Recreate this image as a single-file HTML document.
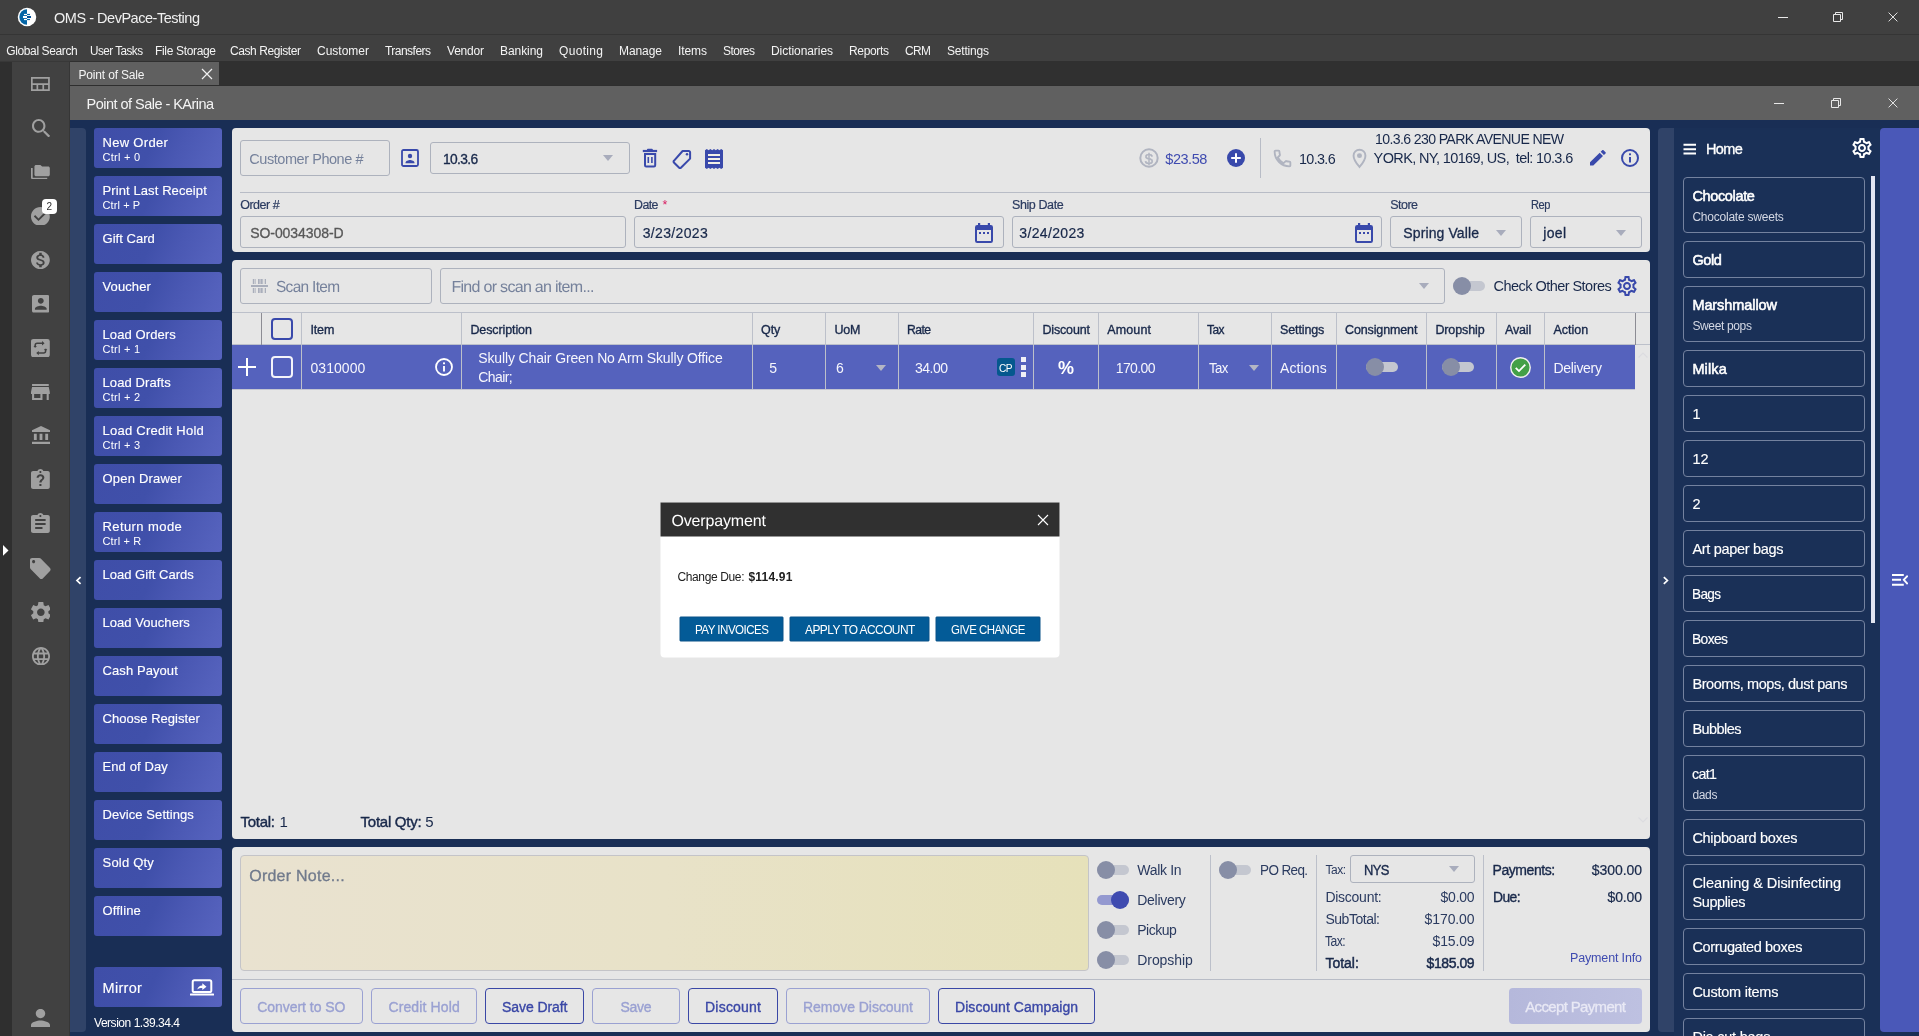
<!DOCTYPE html>
<html lang="en"><head><meta charset="utf-8"><title>OMS - DevPace-Testing</title><style>
html,body{margin:0;padding:0;background:#192e55;}
#app{will-change:transform;position:relative;width:1919px;height:1036px;overflow:hidden;font-family:"Liberation Sans",sans-serif;}
#app div,#app svg,#app .t{position:absolute;box-sizing:border-box;}
.t{white-space:pre;}
</style></head><body><div id="app">
<div style="left:0px;top:0px;width:1919px;height:35px;background:#404040;"></div>
<div style="left:0px;top:34px;width:1919px;height:1px;background:#353535;"></div>
<div style="left:0px;top:35px;width:1919px;height:26px;background:#404040;"></div>
<div style="left:0px;top:61px;width:1919px;height:25px;background:#303030;"></div>
<div style="left:0px;top:62px;width:12px;height:974px;background:#2f2f2f;"></div>
<div style="left:12px;top:62px;width:58px;height:974px;background:#414141;"></div>
<div style="left:0px;top:61px;width:70px;height:1px;background:#383838;"></div>
<div style="left:70px;top:62px;width:149px;height:23px;background:#606060;"></div>
<div style="left:70px;top:85px;width:1849px;height:1px;background:#2e2e2e;"></div>
<div style="left:70px;top:86px;width:1849px;height:34px;background:#606060;"></div>
<div style="left:70px;top:120px;width:1849px;height:916px;background:#192e55;"></div>
<svg style="left:17px;top:7px;width:20px;height:20px;" viewBox="0 0 20 20" fill="currentColor"><circle cx="10" cy="10" r="9.250" fill="#fff"/><path d="M10 2.300A7.700 7.700 0 0 0 10 17.700Z" fill="#0465a6"/><rect x="7" y="6.900" width="3" height="1.200" fill="#fff"/><rect x="6" y="9" width="4" height="2" fill="#fff"/><rect x="7" y="11.900" width="3" height="1.200" fill="#fff"/><rect x="10" y="6.900" width="3" height="1.200" fill="#0465a6"/><rect x="10" y="9" width="4" height="2" fill="#00509a"/><rect x="10" y="11.900" width="3" height="1.200" fill="#0465a6"/></svg>
<span class="t" style="left:54.00px;top:9.00px;font-size:14.5px;line-height:19px;color:#f0f0f0;letter-spacing:-0.476px;">OMS - DevPace-Testing</span>
<svg style="left:1776.5px;top:11px;width:12px;height:12px;" viewBox="0 0 12 12" fill="currentColor"><path d="M1 6.5h10" stroke="#e8e8e8" stroke-width="1" fill="none"/></svg>
<svg style="left:1832px;top:11px;width:12px;height:12px;" viewBox="0 0 12 12" fill="currentColor"><path d="M1.5 3.5h7v7h-7z M3.5 3.5v-2h7v7h-2" stroke="#e8e8e8" stroke-width="1" fill="none"/></svg>
<svg style="left:1886.5px;top:11px;width:12px;height:12px;" viewBox="0 0 12 12" fill="currentColor"><path d="M1 1l10 10M11 1L1 11" stroke="#e8e8e8" stroke-width="1.100" fill="none" transform="translate(0.700 0.700) scale(0.880)"/></svg>
<svg style="left:1772.5px;top:97px;width:12px;height:12px;" viewBox="0 0 12 12" fill="currentColor"><path d="M1 6.5h10" stroke="#e8e8e8" stroke-width="1" fill="none"/></svg>
<svg style="left:1830px;top:97px;width:12px;height:12px;" viewBox="0 0 12 12" fill="currentColor"><path d="M1.5 3.5h7v7h-7z M3.5 3.5v-2h7v7h-2" stroke="#e8e8e8" stroke-width="1" fill="none"/></svg>
<svg style="left:1886.5px;top:97px;width:12px;height:12px;" viewBox="0 0 12 12" fill="currentColor"><path d="M1 1l10 10M11 1L1 11" stroke="#e8e8e8" stroke-width="1.100" fill="none" transform="translate(0.700 0.700) scale(0.880)"/></svg>
<span class="t" style="left:6.30px;top:43.00px;font-size:12px;line-height:16px;color:#f4f4f4;letter-spacing:-0.387px;">Global Search</span>
<span class="t" style="left:90.00px;top:43.00px;font-size:12px;line-height:16px;color:#f4f4f4;letter-spacing:-0.540px;transform:scaleX(0.9766);transform-origin:0 0;">User Tasks</span>
<span class="t" style="left:155.00px;top:43.00px;font-size:12px;line-height:16px;color:#f4f4f4;letter-spacing:-0.337px;">File Storage</span>
<span class="t" style="left:230.00px;top:43.00px;font-size:12px;line-height:16px;color:#f4f4f4;letter-spacing:-0.419px;">Cash Register</span>
<span class="t" style="left:317.00px;top:43.00px;font-size:12px;line-height:16px;color:#f4f4f4;letter-spacing:-0.002px;">Customer</span>
<span class="t" style="left:385.00px;top:43.00px;font-size:12px;line-height:16px;color:#f4f4f4;letter-spacing:-0.529px;">Transfers</span>
<span class="t" style="left:447.00px;top:43.00px;font-size:12px;line-height:16px;color:#f4f4f4;letter-spacing:-0.207px;">Vendor</span>
<span class="t" style="left:500.00px;top:43.00px;font-size:12px;line-height:16px;color:#f4f4f4;letter-spacing:-0.061px;">Banking</span>
<span class="t" style="left:559.00px;top:43.00px;font-size:12px;line-height:16px;color:#f4f4f4;letter-spacing:0.328px;">Quoting</span>
<span class="t" style="left:619.00px;top:43.00px;font-size:12px;line-height:16px;color:#f4f4f4;letter-spacing:-0.073px;">Manage</span>
<span class="t" style="left:678.00px;top:43.00px;font-size:12px;line-height:16px;color:#f4f4f4;letter-spacing:-0.085px;">Items</span>
<span class="t" style="left:723.00px;top:43.00px;font-size:12px;line-height:16px;color:#f4f4f4;letter-spacing:-0.537px;">Stores</span>
<span class="t" style="left:771.00px;top:43.00px;font-size:12px;line-height:16px;color:#f4f4f4;letter-spacing:-0.063px;">Dictionaries</span>
<span class="t" style="left:849.00px;top:43.00px;font-size:12px;line-height:16px;color:#f4f4f4;letter-spacing:-0.336px;">Reports</span>
<span class="t" style="left:905.00px;top:43.00px;font-size:12px;line-height:16px;color:#f4f4f4;letter-spacing:-0.540px;transform:scaleX(0.9905);transform-origin:0 0;">CRM</span>
<span class="t" style="left:947.00px;top:43.00px;font-size:12px;line-height:16px;color:#f4f4f4;letter-spacing:-0.194px;">Settings</span>
<span class="t" style="left:78.50px;top:67.00px;font-size:12px;line-height:16px;color:#f4f4f4;letter-spacing:-0.171px;">Point of Sale</span>
<svg style="left:201px;top:68px;width:12px;height:12px;" viewBox="0 0 12 12" fill="currentColor"><path d="M1 1l10 10M11 1L1 11" stroke="#f0f0f0" stroke-width="1.2" fill="none"/></svg>
<span class="t" style="left:86.60px;top:95.00px;font-size:14.5px;line-height:19px;color:#f4f4f4;letter-spacing:-0.530px;">Point of Sale - KArina</span>
<svg style="left:31.1px;top:77px;width:18.8px;height:14px;color:#a0a0a0;" viewBox="0 0 18.800 14" fill="currentColor"><path d="M0 0h18.800v14H0z M1.700 1.700v4.600h15.400V1.700z M1.700 8v4.300h3.800V8z M7.200 8v4.300h4.200V8z M13.100 8v4.300h4V8z" fill-rule="evenodd"/></svg>
<svg style="left:31.5px;top:118.7px;width:18.1px;height:18.5px;color:#a0a0a0" viewBox="3.000 3.000 17.490 17.490" preserveAspectRatio="none" fill="currentColor"><path d="M15.5 14h-.79l-.28-.27C15.41 12.59 16 11.11 16 9.5 16 5.91 13.09 3 9.5 3S3 5.91 3 9.5 5.91 16 9.5 16c1.61 0 3.09-.59 4.23-1.57l.27.28v.79l5 4.99L20.490 19l-4.990-5zm-6 0C7.010 14 5 11.990 5 9.500S7.010 5 9.500 5 14 7.010 14 9.500 11.990 14 9.500 14z"/></svg>
<svg style="left:31.1px;top:164.7px;width:18.8px;height:14.3px;color:#a0a0a0" viewBox="1.000 2.000 22.000 19.000" preserveAspectRatio="none" fill="currentColor"><path d="M3 6H1v13c0 1.1.9 2 2 2h17v-2H3V6zm18-2h-7l-2-2H7c-1.100 0-1.990.900-1.990 2L5 15c0 1.100.900 2 2 2h14c1.100 0 2-.900 2-2V6c0-1.100-.900-2-2-2z"/></svg>
<svg style="left:31.1px;top:206.5px;width:18.8px;height:18.8px;color:#a0a0a0" viewBox="2.000 2.000 20.000 20.000" preserveAspectRatio="none" fill="currentColor"><path d="M12 2C6.480 2 2 6.480 2 12s4.480 10 10 10 10-4.480 10-10S17.520 2 12 2zm-2 15l-5-5 1.410-1.410L10 14.170l7.590-7.590L19 8l-9 9z"/></svg>
<svg style="left:31.1px;top:250.9px;width:18.8px;height:18.2px;color:#a0a0a0" viewBox="2.000 2.000 20.000 20.000" preserveAspectRatio="none" fill="currentColor"><path d="M12 2C6.480 2 2 6.480 2 12s4.480 10 10 10 10-4.480 10-10S17.520 2 12 2zm1.410 16.090V20h-2.670v-1.930c-1.710-.360-3.160-1.460-3.270-3.400h1.960c.100 1.050.820 1.870 2.650 1.870 1.960 0 2.400-.980 2.400-1.590 0-.830-.440-1.610-2.670-2.140-2.480-.600-4.180-1.620-4.180-3.670 0-1.720 1.390-2.840 3.110-3.210V4h2.670v1.950c1.860.450 2.790 1.860 2.850 3.390H14.300c-.050-1.110-.640-1.870-2.220-1.870-1.500 0-2.400.680-2.400 1.640 0 .840.650 1.390 2.670 1.910s4.180 1.390 4.180 3.910c-.010 1.830-1.380 2.830-3.120 3.160z"/></svg>
<svg style="left:31.7px;top:295.1px;width:17.6px;height:17.6px;color:#a0a0a0" viewBox="3.000 3.000 18.000 18.000" preserveAspectRatio="none" fill="currentColor"><path d="M3 5v14c0 1.100.890 2 2 2h14c1.100 0 2-.900 2-2V5c0-1.100-.900-2-2-2H5c-1.110 0-2 .900-2 2zm12 4c0 1.660-1.340 3-3 3s-3-1.340-3-3 1.340-3 3-3 3 1.340 3 3zm-9 8c0-2 4-3.100 6-3.100s6 1.100 6 3.100v1H6v-1z"/></svg>
<svg style="left:31.1px;top:338.7px;width:18.8px;height:18.3px;color:#a0a0a0;" viewBox="0 0 18.800 18.300" fill="currentColor"><rect x="0" y="0" width="18.800" height="18.300" rx="2.500"/><path d="M4.200 8.500V6.200a2 2 0 0 1 2-2h5.500 M14.600 9.800v2.300a2 2 0 0 1-2 2H7.100" stroke="#404040" stroke-width="1.500" fill="none"/><path d="M11 2l2.600 2.200L11 6.400z M7.800 11.900l-2.600 2.200 2.600 2.200z M2.500 8l1.700-2 1.700 2z M16.300 10.300l-1.700 2-1.700-2z" fill="#404040"/></svg>
<svg style="left:31.1px;top:384px;width:18.8px;height:16px;color:#a0a0a0" viewBox="3.000 4.000 18.000 16.000" preserveAspectRatio="none" fill="currentColor"><path d="M20 4H4v2h16V4zm1 10v-2l-1-5H4l-1 5v2h1v6h10v-6h4v6h2v-6h1zm-9 4H6v-4h6v4z"/></svg>
<svg style="left:31.5px;top:425.9px;width:18px;height:18.3px;color:#a0a0a0" viewBox="2.000 1.000 19.000 21.000" preserveAspectRatio="none" fill="currentColor"><path d="M4 10v7h3v-7H4zm6 0v7h3v-7h-3zM2 22h19v-3H2v3zm14-12v7h3v-7h-3zm-4.500-9L2 6v2h19V6l-9.500-5z"/></svg>
<svg style="left:31.1px;top:469.2px;width:18.8px;height:19.9px;color:#a0a0a0" viewBox="3.000 1.000 18.000 20.000" preserveAspectRatio="none" fill="currentColor"><path d="M19 3h-4.180C14.400 1.840 13.300 1 12 1c-1.300 0-2.400.840-2.820 2H5c-1.100 0-2 .900-2 2v14c0 1.100.900 2 2 2h14c1.100 0 2-.900 2-2V5c0-1.100-.900-2-2-2zm-7 0c.550 0 1 .450 1 1s-.450 1-1 1-1-.450-1-1 .450-1 1-1zm1 15h-2v-2h2v2zm1.800-6.100c-.700.900-1.500 1.300-1.700 2.600h-2.100c.1-1.700.900-2.400 1.700-3.100.600-.500 1.100-.900 1.100-1.700 0-.900-.800-1.500-1.700-1.500-1 0-1.700.700-1.800 1.600H8.300c.200-2 1.700-3.500 3.800-3.500 2.100 0 3.700 1.300 3.700 3.300 0 1-.400 1.700-1 2.300z"/></svg>
<svg style="left:31.1px;top:513.1px;width:18.8px;height:20px;color:#a0a0a0" viewBox="3.000 1.000 18.000 20.000" preserveAspectRatio="none" fill="currentColor"><path d="M19 3h-4.180C14.400 1.840 13.300 1 12 1c-1.300 0-2.400.840-2.820 2H5c-1.100 0-2 .900-2 2v14c0 1.100.900 2 2 2h14c1.100 0 2-.900 2-2V5c0-1.100-.900-2-2-2zm-7 0c.550 0 1 .450 1 1s-.450 1-1 1-1-.450-1-1 .450-1 1-1zm2 14H7v-2h7v2zm3-4H7v-2h10v2zm0-4H7V7h10v2z"/></svg>
<svg style="left:30.1px;top:557.5px;width:20.6px;height:21px;color:#a0a0a0" viewBox="2.000 2.000 20.000 20.000" preserveAspectRatio="none" fill="currentColor"><path d="M21.410 11.580l-9-9C12.050 2.220 11.550 2 11 2H4c-1.100 0-2 .900-2 2v7c0 .550.220 1.050.590 1.420l9 9c.360.360.860.580 1.410.580.550 0 1.050-.220 1.410-.590l7-7c.370-.360.590-.860.590-1.410 0-.550-.230-1.060-.590-1.420zM5.500 7C4.670 7 4 6.330 4 5.500S4.670 4 5.500 4 7 4.670 7 5.500 6.330 7 5.500 7z"/></svg>
<svg style="left:30.7px;top:601.7px;width:19.7px;height:20.5px;color:#a0a0a0" viewBox="2.662 2.400 18.676 19.200" preserveAspectRatio="none" fill="currentColor"><path d="M19.140 12.940c.040-.300.060-.610.060-.940 0-.320-.020-.640-.070-.940l2.030-1.580c.180-.140.230-.410.120-.610l-1.920-3.320c-.120-.220-.370-.290-.590-.220l-2.390.960c-.500-.380-1.030-.700-1.620-.940l-.360-2.540c-.040-.240-.240-.410-.480-.410h-3.840c-.240 0-.430.170-.470.410l-.360 2.540c-.590.240-1.130.570-1.620.940l-2.390-.960c-.220-.080-.470 0-.590.220L2.740 8.870c-.120.210-.080.470.120.610l2.030 1.580c-.050.300-.090.630-.090.940s.020.640.070.940l-2.030 1.580c-.180.140-.230.410-.120.610l1.920 3.320c.120.220.370.290.590.220l2.390-.960c.500.380 1.030.700 1.620.940l.360 2.540c.050.240.240.410.480.410h3.840c.240 0 .440-.170.470-.410l.360-2.540c.590-.240 1.130-.560 1.620-.940l2.390.960c.220.080.470 0 .590-.220l1.920-3.320c.120-.220.070-.470-.120-.610l-2.010-1.580zM12 15.600c-1.980 0-3.600-1.620-3.600-3.600s1.620-3.600 3.600-3.600 3.600 1.620 3.600 3.600-1.620 3.600-3.600 3.600z"/></svg>
<svg style="left:31.6px;top:646.8px;width:18px;height:18.6px;color:#a0a0a0" viewBox="2.000 2.000 20.000 20.000" preserveAspectRatio="none" fill="currentColor"><path d="M11.990 2C6.470 2 2 6.480 2 12s4.470 10 9.990 10C17.520 22 22 17.520 22 12S17.520 2 11.990 2zm6.930 6h-2.950c-.320-1.250-.780-2.450-1.380-3.560 1.840.630 3.370 1.910 4.330 3.560zM12 4.040c.830 1.200 1.480 2.530 1.910 3.960h-3.820c.430-1.430 1.080-2.760 1.910-3.960zM4.260 14C4.100 13.360 4 12.690 4 12s.100-1.360.260-2h3.380c-.080.660-.140 1.320-.140 2 0 .680.060 1.340.140 2H4.260zm.820 2h2.950c.320 1.250.780 2.450 1.380 3.560-1.840-.630-3.370-1.900-4.330-3.560zm2.950-8H5.080c.960-1.660 2.490-2.930 4.330-3.560C8.810 5.550 8.350 6.750 8.030 8zM12 19.960c-.830-1.200-1.480-2.530-1.910-3.960h3.820c-.430 1.430-1.080 2.760-1.910 3.960zM14.340 14H9.660c-.090-.660-.160-1.320-.160-2 0-.680.070-1.350.160-2h4.680c.090.650.160 1.320.160 2 0 .680-.070 1.340-.160 2zm.250 5.560c.600-1.110 1.060-2.310 1.380-3.560h2.950c-.960 1.650-2.490 2.930-4.330 3.560zM16.360 14c.080-.660.140-1.320.140-2 0-.680-.060-1.340-.140-2h3.380c.160.640.260 1.310.260 2s-.100 1.360-.260 2h-3.380z"/></svg>
<svg style="left:31px;top:1008.8px;width:19px;height:18.4px;color:#a0a0a0" viewBox="4.000 4.000 16.000 16.000" preserveAspectRatio="none" fill="currentColor"><path d="M12 12c2.210 0 4-1.790 4-4s-1.790-4-4-4-4 1.790-4 4 1.790 4 4 4zm0 2c-2.670 0-8 1.340-8 4v2h16v-2c0-2.660-5.330-4-8-4z"/></svg>
<div style="left:69px;top:61px;width:1px;height:975px;background:#363636;"></div>
<div style="left:42px;top:199px;width:15px;height:15px;background:#ffffff;border-radius:4px;"></div>
<span class="t" style="left:46.50px;top:200.00px;font-size:10px;line-height:13px;color:#303030;">2</span>
<svg style="left:3px;top:545.3px;width:5.5px;height:10.8px;" viewBox="0 0 5.500 10.800" fill="currentColor"><path d="M0 0l5.500 5.400-5.500 5.400z" fill="#fff"/></svg>
<div style="left:70px;top:128px;width:16px;height:904px;background:#304368;border-radius:0 4px 4px 0;"></div>
<svg style="left:74.6px;top:575.6px;width:7.4px;height:9px;" viewBox="0 0 9 11" fill="currentColor"><path d="M6.800 1.300L2.400 5.500 6.800 9.700" stroke="#fff" stroke-width="2.100" fill="none"/></svg>
<div style="left:94px;top:128px;width:128px;height:40px;background:linear-gradient(115deg,#3f4ea8 0%,#4050aa 45%,#4a58b3 65%,#5461bc 90%,#5763bf 100%);border-radius:3px;"></div>
<span class="t" style="left:102.50px;top:134.00px;font-size:13px;line-height:17px;color:#fff;letter-spacing:0.306px;-webkit-text-stroke:0.15px #fff;">New Order</span>
<span class="t" style="left:102.50px;top:150.00px;font-size:11px;line-height:14px;color:#fff;letter-spacing:0.277px;">Ctrl + 0</span>
<div style="left:94px;top:176px;width:128px;height:40px;background:linear-gradient(115deg,#3f4ea8 0%,#4050aa 45%,#4a58b3 65%,#5461bc 90%,#5763bf 100%);border-radius:3px;"></div>
<span class="t" style="left:102.50px;top:182.00px;font-size:13px;line-height:17px;color:#fff;letter-spacing:0.100px;-webkit-text-stroke:0.15px #fff;">Print Last Receipt</span>
<span class="t" style="left:102.50px;top:198.00px;font-size:11px;line-height:14px;color:#fff;letter-spacing:0.103px;">Ctrl + P</span>
<div style="left:94px;top:224px;width:128px;height:40px;background:linear-gradient(115deg,#3f4ea8 0%,#4050aa 45%,#4a58b3 65%,#5461bc 90%,#5763bf 100%);border-radius:3px;"></div>
<span class="t" style="left:102.50px;top:230.00px;font-size:13px;line-height:17px;color:#fff;letter-spacing:0.036px;-webkit-text-stroke:0.15px #fff;">Gift Card</span>
<div style="left:94px;top:272px;width:128px;height:40px;background:linear-gradient(115deg,#3f4ea8 0%,#4050aa 45%,#4a58b3 65%,#5461bc 90%,#5763bf 100%);border-radius:3px;"></div>
<span class="t" style="left:102.50px;top:278.00px;font-size:13px;line-height:17px;color:#fff;letter-spacing:0.099px;-webkit-text-stroke:0.15px #fff;">Voucher</span>
<div style="left:94px;top:320px;width:128px;height:40px;background:linear-gradient(115deg,#3f4ea8 0%,#4050aa 45%,#4a58b3 65%,#5461bc 90%,#5763bf 100%);border-radius:3px;"></div>
<span class="t" style="left:102.50px;top:326.00px;font-size:13px;line-height:17px;color:#fff;letter-spacing:0.104px;-webkit-text-stroke:0.15px #fff;">Load Orders</span>
<span class="t" style="left:102.50px;top:342.00px;font-size:11px;line-height:14px;color:#fff;letter-spacing:0.277px;">Ctrl + 1</span>
<div style="left:94px;top:368px;width:128px;height:40px;background:linear-gradient(115deg,#3f4ea8 0%,#4050aa 45%,#4a58b3 65%,#5461bc 90%,#5763bf 100%);border-radius:3px;"></div>
<span class="t" style="left:102.50px;top:374.00px;font-size:13px;line-height:17px;color:#fff;letter-spacing:0.110px;-webkit-text-stroke:0.15px #fff;">Load Drafts</span>
<span class="t" style="left:102.50px;top:390.00px;font-size:11px;line-height:14px;color:#fff;letter-spacing:0.277px;">Ctrl + 2</span>
<div style="left:94px;top:416px;width:128px;height:40px;background:linear-gradient(115deg,#3f4ea8 0%,#4050aa 45%,#4a58b3 65%,#5461bc 90%,#5763bf 100%);border-radius:3px;"></div>
<span class="t" style="left:102.50px;top:422.00px;font-size:13px;line-height:17px;color:#fff;letter-spacing:0.249px;-webkit-text-stroke:0.15px #fff;">Load Credit Hold</span>
<span class="t" style="left:102.50px;top:438.00px;font-size:11px;line-height:14px;color:#fff;letter-spacing:0.277px;">Ctrl + 3</span>
<div style="left:94px;top:464px;width:128px;height:40px;background:linear-gradient(115deg,#3f4ea8 0%,#4050aa 45%,#4a58b3 65%,#5461bc 90%,#5763bf 100%);border-radius:3px;"></div>
<span class="t" style="left:102.50px;top:470.00px;font-size:13px;line-height:17px;color:#fff;letter-spacing:0.199px;-webkit-text-stroke:0.15px #fff;">Open Drawer</span>
<div style="left:94px;top:512px;width:128px;height:40px;background:linear-gradient(115deg,#3f4ea8 0%,#4050aa 45%,#4a58b3 65%,#5461bc 90%,#5763bf 100%);border-radius:3px;"></div>
<span class="t" style="left:102.50px;top:518.00px;font-size:13px;line-height:17px;color:#fff;letter-spacing:0.415px;-webkit-text-stroke:0.15px #fff;">Return mode</span>
<span class="t" style="left:102.50px;top:534.00px;font-size:11px;line-height:14px;color:#fff;letter-spacing:0.159px;">Ctrl + R</span>
<div style="left:94px;top:560px;width:128px;height:40px;background:linear-gradient(115deg,#3f4ea8 0%,#4050aa 45%,#4a58b3 65%,#5461bc 90%,#5763bf 100%);border-radius:3px;"></div>
<span class="t" style="left:102.50px;top:566.00px;font-size:13px;line-height:17px;color:#fff;letter-spacing:0.018px;-webkit-text-stroke:0.15px #fff;">Load Gift Cards</span>
<div style="left:94px;top:608px;width:128px;height:40px;background:linear-gradient(115deg,#3f4ea8 0%,#4050aa 45%,#4a58b3 65%,#5461bc 90%,#5763bf 100%);border-radius:3px;"></div>
<span class="t" style="left:102.50px;top:614.00px;font-size:13px;line-height:17px;color:#fff;letter-spacing:0.047px;-webkit-text-stroke:0.15px #fff;">Load Vouchers</span>
<div style="left:94px;top:656px;width:128px;height:40px;background:linear-gradient(115deg,#3f4ea8 0%,#4050aa 45%,#4a58b3 65%,#5461bc 90%,#5763bf 100%);border-radius:3px;"></div>
<span class="t" style="left:102.50px;top:662.00px;font-size:13px;line-height:17px;color:#fff;letter-spacing:0.087px;-webkit-text-stroke:0.15px #fff;">Cash Payout</span>
<div style="left:94px;top:704px;width:128px;height:40px;background:linear-gradient(115deg,#3f4ea8 0%,#4050aa 45%,#4a58b3 65%,#5461bc 90%,#5763bf 100%);border-radius:3px;"></div>
<span class="t" style="left:102.50px;top:710.00px;font-size:13px;line-height:17px;color:#fff;letter-spacing:0.034px;-webkit-text-stroke:0.15px #fff;">Choose Register</span>
<div style="left:94px;top:752px;width:128px;height:40px;background:linear-gradient(115deg,#3f4ea8 0%,#4050aa 45%,#4a58b3 65%,#5461bc 90%,#5763bf 100%);border-radius:3px;"></div>
<span class="t" style="left:102.50px;top:758.00px;font-size:13px;line-height:17px;color:#fff;letter-spacing:0.109px;-webkit-text-stroke:0.15px #fff;">End of Day</span>
<div style="left:94px;top:800px;width:128px;height:40px;background:linear-gradient(115deg,#3f4ea8 0%,#4050aa 45%,#4a58b3 65%,#5461bc 90%,#5763bf 100%);border-radius:3px;"></div>
<span class="t" style="left:102.50px;top:806.00px;font-size:13px;line-height:17px;color:#fff;letter-spacing:0.070px;-webkit-text-stroke:0.15px #fff;">Device Settings</span>
<div style="left:94px;top:848px;width:128px;height:40px;background:linear-gradient(115deg,#3f4ea8 0%,#4050aa 45%,#4a58b3 65%,#5461bc 90%,#5763bf 100%);border-radius:3px;"></div>
<span class="t" style="left:102.50px;top:854.00px;font-size:13px;line-height:17px;color:#fff;letter-spacing:0.206px;-webkit-text-stroke:0.15px #fff;">Sold Qty</span>
<div style="left:94px;top:896px;width:128px;height:40px;background:linear-gradient(115deg,#3f4ea8 0%,#4050aa 45%,#4a58b3 65%,#5461bc 90%,#5763bf 100%);border-radius:3px;"></div>
<span class="t" style="left:102.50px;top:902.00px;font-size:13px;line-height:17px;color:#fff;letter-spacing:0.160px;-webkit-text-stroke:0.15px #fff;">Offline</span>
<div style="left:94px;top:967px;width:128px;height:40px;background:linear-gradient(115deg,#3f4ea8 0%,#4050aa 45%,#4a58b3 65%,#5461bc 90%,#5763bf 100%);border-radius:3px;"></div>
<span class="t" style="left:102.50px;top:979.00px;font-size:14.5px;line-height:19px;color:#fff;letter-spacing:0.309px;-webkit-text-stroke:0.15px #fff;">Mirror</span>
<svg style="left:190px;top:978.5px;width:24px;height:17px;" viewBox="0 0 24 17" fill="currentColor"><rect x="2.700" y="1.300" width="18.600" height="11.700" rx="1.600" fill="none" stroke="#fff" stroke-width="2"/><rect x="0" y="14.600" width="24" height="2" rx="0.500" fill="#fff"/><path d="M7.300 10.500c.400-2.500 2.200-3.900 5-4.100V4.300l4.200 3.400-4.200 3.400V9.100c-2.200 0-3.600.400-5 1.400z" fill="#fff"/></svg>
<span class="t" style="left:94.00px;top:1015.00px;font-size:12px;line-height:16px;color:#fff;letter-spacing:-0.463px;">Version 1.39.34.4</span>
<div style="left:232px;top:128px;width:1418px;height:124px;background:#e6e6e6;border-radius:4px;"></div>
<div style="left:232px;top:260px;width:1418px;height:579px;background:#e6e6e6;border-radius:4px;"></div>
<div style="left:232px;top:847px;width:1418px;height:185px;background:#e6e6e6;border-radius:4px;"></div>
<div style="left:240px;top:140px;width:150px;height:36px;border:1px solid #adb2bd;border-radius:3px;"></div>
<span class="t" style="left:249.30px;top:150.00px;font-size:14.5px;line-height:19px;color:#75819b;letter-spacing:-0.447px;">Customer Phone #</span>
<svg style="left:401px;top:149px;width:18px;height:18px;" viewBox="0 0 18 18" fill="currentColor"><rect x="1" y="1" width="16" height="16" rx="1.500" fill="none" stroke="#3949ab" stroke-width="1.800"/><circle cx="9" cy="7" r="2.200" fill="#3949ab"/><path d="M4.500 13.800c0-2 3-2.900 4.500-2.900s4.500.900 4.500 2.900v.400h-9z" fill="#3949ab"/></svg>
<div style="left:430px;top:142px;width:200px;height:32px;border:1px solid #adb2bd;border-radius:3px;"></div>
<span class="t" style="left:443.10px;top:150.00px;font-size:14.5px;line-height:19px;color:#18284a;letter-spacing:-0.652px;-webkit-text-stroke:0.35px #18284a;transform:scaleX(0.9500);transform-origin:0 0;">10.3.6</span>
<svg style="left:603.0px;top:155.0px;width:10px;height:6px;" viewBox="0 0 10 6" fill="currentColor"><path d="M0 0h10l-5.0 6z" fill="#a8acbc"/></svg>
<svg style="left:641px;top:148px;width:18px;height:20px;" viewBox="0 0 18 20" fill="currentColor"><rect x="1.800" y="1.900" width="14.300" height="2.200" fill="#3949ab"/><rect x="6" y="0.700" width="5.800" height="2" rx="0.900" fill="#3949ab"/><path d="M4 6h10.200v11.200a1.200 1.200 0 0 1-1.200 1.200H5.200a1.200 1.200 0 0 1-1.200-1.200z" stroke="#3949ab" stroke-width="2" fill="none"/><path d="M7.300 9v6M10.900 9v6" stroke="#3949ab" stroke-width="1.600"/></svg>
<svg style="left:672px;top:149px;width:20px;height:20px;" viewBox="0 0 20 20" fill="currentColor"><path d="M10.600 2h6.200a1.300 1.300 0 0 1 1.300 1.300v6.300l-9.200 9.200a1.200 1.200 0 0 1-1.700 0l-5.300-5.300a1.200 1.200 0 0 1 0-1.700z" stroke="#3949ab" stroke-width="2" fill="none" stroke-linejoin="round"/><circle cx="15" cy="5.200" r="1.250" fill="#3949ab"/></svg>
<svg style="left:704px;top:148px;width:20px;height:22px;" viewBox="0 0 20 22" fill="currentColor"><path d="M1 2.30 L2.80 1.00 L4.60 2.30 L6.40 1.00 L8.20 2.30 L10.00 1.00 L11.80 2.30 L13.60 1.00 L15.40 2.30 L17.20 1.00 L19.00 2.30 L19 19.70 L17.20 21.00 L15.40 19.70 L13.60 21.00 L11.80 19.70 L10.00 21.00 L8.20 19.70 L6.40 21.00 L4.60 19.70 L2.80 21.00 L1.00 19.70Z" fill="#3949ab"/><path d="M4 7h12M4 11h12M4 15h12" stroke="#f2efe6" stroke-width="2"/></svg>
<svg style="left:1139px;top:148px;width:20px;height:20px;" viewBox="0 0 20 20" fill="currentColor"><circle cx="10" cy="10" r="8.700" fill="none" stroke="#b0b4c0" stroke-width="2"/></svg>
<span class="t" style="left:1144.80px;top:148.50px;font-size:15px;line-height:20px;color:#b0b4c0;-webkit-text-stroke:0.4px #b0b4c0;">$</span>
<span class="t" style="left:1165.30px;top:150.00px;font-size:14.5px;line-height:19px;color:#3f4bb0;letter-spacing:-0.470px;">$23.58</span>
<svg style="left:1227px;top:149px;width:18px;height:18px;" viewBox="0 0 18 18" fill="currentColor"><circle cx="9" cy="9" r="9" fill="#3949ab"/><path d="M9 4.200v9.600M4.200 9h9.600" stroke="#fff" stroke-width="2"/></svg>
<div style="left:1260px;top:138px;width:1px;height:40px;background:#b8bcc6;"></div>
<svg style="left:1272px;top:148px;width:21px;height:21px;" viewBox="0 0 24 24" fill="none"><path d="M6.620 10.790c1.440 2.830 3.760 5.140 6.590 6.590l2.200-2.200c.270-.270.670-.360 1.020-.240 1.120.370 2.330.570 3.570.570.550 0 1 .450 1 1V20c0 .550-.450 1-1 1-9.390 0-17-7.610-17-17 0-.550.450-1 1-1h3.500c.550 0 1 .450 1 1 0 1.250.200 2.450.570 3.570.110.350.030.740-.250 1.020l-2.200 2.200z" fill="none" stroke="#b0b4c0" stroke-width="2.100"/></svg>
<span class="t" style="left:1299.00px;top:150.00px;font-size:14.5px;line-height:19px;color:#18284a;letter-spacing:-0.652px;transform:scaleX(0.9905);transform-origin:0 0;">10.3.6</span>
<svg style="left:1348px;top:147px;width:23px;height:23px;" viewBox="0 0 24 24" fill="currentColor"><path d="M12 2.800C8.600 2.800 5.800 5.500 5.800 9c0 4.600 6.200 11.800 6.200 11.800s6.200-7.200 6.200-11.800c0-3.500-2.800-6.200-6.200-6.200z" fill="none" stroke="#b0b4c0" stroke-width="2"/><circle cx="12" cy="9" r="2.600" fill="#b0b4c0"/></svg>
<span class="t" style="left:1374.60px;top:130.00px;font-size:14.5px;line-height:19px;color:#18284a;letter-spacing:-0.652px;transform:scaleX(0.9732);transform-origin:0 0;">10.3.6 230 PARK AVENUE NEW</span>
<span class="t" style="left:1373.60px;top:149.00px;font-size:14.5px;line-height:19px;color:#18284a;letter-spacing:-0.630px;">YORK, NY, 10169, US,  tel: 10.3.6</span>
<svg style="left:1590px;top:150.2px;width:15.8px;height:15.6px;color:#3949ab" viewBox="3.000 2.998 18.002 18.003" preserveAspectRatio="none" fill="currentColor"><path d="M3 17.250V21h3.750L17.810 9.940l-3.750-3.750L3 17.250zM20.710 7.040c.390-.390.390-1.020 0-1.410l-2.340-2.340c-.390-.390-1.020-.390-1.410 0l-1.830 1.830 3.750 3.750 1.830-1.830z"/></svg>
<svg style="left:1621px;top:149px;width:18px;height:18px;" viewBox="0 0 18 18" fill="currentColor"><circle cx="9" cy="9" r="8" fill="none" stroke="#3949ab" stroke-width="2"/><path d="M9 8v5.600" stroke="#3949ab" stroke-width="2"/><rect x="8" y="4.300" width="2" height="2" rx="0.400" fill="#3949ab"/></svg>
<div style="left:240px;top:192px;width:1410px;height:1px;background:#b8bcc6;"></div>
<span class="t" style="left:240.20px;top:197.00px;font-size:12.5px;line-height:16px;color:#2b3b60;letter-spacing:-0.480px;-webkit-text-stroke:0.2px #2b3b60;">Order #</span>
<span class="t" style="left:634.00px;top:197.00px;font-size:12.5px;line-height:16px;color:#2b3b60;letter-spacing:-0.562px;-webkit-text-stroke:0.2px #2b3b60;transform:scaleX(0.9912);transform-origin:0 0;">Date</span>
<span class="t" style="left:662.50px;top:197.00px;font-size:12.5px;line-height:16px;color:#d81b60;">*</span>
<span class="t" style="left:1012.00px;top:197.00px;font-size:12.5px;line-height:16px;color:#2b3b60;letter-spacing:-0.400px;-webkit-text-stroke:0.2px #2b3b60;">Ship Date</span>
<span class="t" style="left:1390.30px;top:197.00px;font-size:12.5px;line-height:16px;color:#2b3b60;letter-spacing:-0.544px;-webkit-text-stroke:0.2px #2b3b60;">Store</span>
<span class="t" style="left:1530.70px;top:197.00px;font-size:12.5px;line-height:16px;color:#2b3b60;letter-spacing:-0.562px;-webkit-text-stroke:0.2px #2b3b60;transform:scaleX(0.8851);transform-origin:0 0;">Rep</span>
<div style="left:240px;top:216px;width:386px;height:32px;border:1px solid #adb2bd;border-radius:3px;"></div>
<span class="t" style="left:250.20px;top:224.00px;font-size:14px;line-height:18px;color:#585858;letter-spacing:-0.061px;-webkit-text-stroke:0.3px #585858;">SO-0034308-D</span>
<div style="left:634px;top:216px;width:370px;height:32px;border:1px solid #adb2bd;border-radius:3px;"></div>
<span class="t" style="left:642.70px;top:224.00px;font-size:14px;line-height:18px;color:#18284a;letter-spacing:0.340px;-webkit-text-stroke:0.2px #18284a;">3/23/2023</span>
<div style="left:1012px;top:216px;width:370px;height:32px;border:1px solid #adb2bd;border-radius:3px;"></div>
<span class="t" style="left:1019.30px;top:224.00px;font-size:14px;line-height:18px;color:#18284a;letter-spacing:0.340px;-webkit-text-stroke:0.2px #18284a;">3/24/2023</span>
<div style="left:1390px;top:216px;width:132px;height:32px;border:1px solid #adb2bd;border-radius:3px;"></div>
<span class="t" style="left:1403.30px;top:224.00px;font-size:14px;line-height:18px;color:#18284a;letter-spacing:0.113px;-webkit-text-stroke:0.3px #18284a;">Spring Valle</span>
<div style="left:1530px;top:216px;width:112px;height:32px;border:1px solid #adb2bd;border-radius:3px;"></div>
<span class="t" style="left:1543.30px;top:224.00px;font-size:14px;line-height:18px;color:#18284a;letter-spacing:0.302px;-webkit-text-stroke:0.3px #18284a;">joel</span>
<svg style="left:1496.0px;top:229.5px;width:10px;height:6px;" viewBox="0 0 10 6" fill="currentColor"><path d="M0 0h10l-5.0 6z" fill="#a8acbc"/></svg>
<svg style="left:1616.0px;top:229.5px;width:10px;height:6px;" viewBox="0 0 10 6" fill="currentColor"><path d="M0 0h10l-5.0 6z" fill="#a8acbc"/></svg>
<svg style="left:975px;top:223px;width:18px;height:20px;" viewBox="0 0 18 20" fill="currentColor"><path fill-rule="evenodd" d="M2.200 2h13.600a2.200 2.200 0 0 1 2.200 2.200v13.600a2.200 2.200 0 0 1-2.200 2.200H2.200a2.200 2.200 0 0 1-2.200-2.200V4.200a2.200 2.200 0 0 1 2.200-2.200z M2 7v11h14V7z" fill="#3949ab"/><path d="M3 0h2.200v3H3z M12.800 0h2.200v3h-2.200z M4 9h2v2H4z M8 9h2v2H8z M12 9h2v2h-2z" fill="#3949ab"/></svg>
<svg style="left:1355px;top:223px;width:18px;height:20px;" viewBox="0 0 18 20" fill="currentColor"><path fill-rule="evenodd" d="M2.200 2h13.600a2.200 2.200 0 0 1 2.200 2.200v13.600a2.200 2.200 0 0 1-2.200 2.200H2.200a2.200 2.200 0 0 1-2.200-2.200V4.200a2.200 2.200 0 0 1 2.200-2.200z M2 7v11h14V7z" fill="#3949ab"/><path d="M3 0h2.200v3H3z M12.800 0h2.200v3h-2.200z M4 9h2v2H4z M8 9h2v2H8z M12 9h2v2h-2z" fill="#3949ab"/></svg>
<div style="left:240px;top:268px;width:192px;height:36px;border:1px solid #adb2bd;border-radius:3px;"></div>
<svg style="left:251px;top:279px;width:17px;height:14px;" viewBox="0 0 17 14" fill="currentColor"><path d="M1.80 0h1.20v5h-1.20z M1.80 9h1.20v5h-1.20z M3.60 0h1.00v5h-1.00z M3.60 9h1.00v5h-1.00z M7.00 0h1.30v5h-1.30z M7.00 9h1.30v5h-1.30z M8.60 0h1.00v5h-1.00z M8.60 9h1.00v5h-1.00z M10.00 0h1.00v5h-1.00z M10.00 9h1.00v5h-1.00z M11.30 0h0.80v5h-0.80z M11.30 9h0.80v5h-0.80z M13.70 0h1.30v5h-1.30z M13.70 9h1.30v5h-1.30z M0 6h17v2H0z" fill="#a9aebb"/></svg>
<span class="t" style="left:276.40px;top:277.00px;font-size:16px;line-height:21px;color:#75819b;letter-spacing:-0.720px;text-rendering:geometricPrecision;transform:scaleX(0.9657);transform-origin:0 0;">Scan Item</span>
<div style="left:440px;top:268px;width:1005px;height:36px;border:1px solid #adb2bd;border-radius:3px;"></div>
<span class="t" style="left:451.40px;top:277.00px;font-size:16px;line-height:21px;color:#75819b;letter-spacing:-0.695px;text-rendering:geometricPrecision;">Find or scan an item...</span>
<svg style="left:1419.0px;top:283.0px;width:10px;height:6px;" viewBox="0 0 10 6" fill="currentColor"><path d="M0 0h10l-5.0 6z" fill="#a8acbc"/></svg>
<div style="left:1453px;top:281px;width:32px;height:10px;background:#c4c7d0;border-radius:5px;"></div>
<div style="left:1453px;top:277px;width:18px;height:18px;background:#878ea6;border-radius:9px;"></div>
<span class="t" style="left:1493.50px;top:277.00px;font-size:14.5px;line-height:19px;color:#18284a;letter-spacing:-0.537px;">Check Other Stores</span>
<svg style="left:1614.6px;top:274px;width:24px;height:24px;color:#3949ab;" viewBox="0 0 24 24" fill="currentColor"><path d="M19.430 12.980c.040-.320.070-.640.070-.980 0-.340-.030-.660-.070-.980l2.110-1.650c.190-.150.240-.420.120-.640l-2-3.460c-.090-.160-.260-.250-.440-.250-.060 0-.120.010-.170.030l-2.490 1c-.520-.400-1.080-.730-1.690-.980l-.380-2.650C14.460 2.180 14.250 2 14 2h-4c-.250 0-.460.180-.490.420l-.380 2.650c-.610.250-1.170.590-1.690.980l-2.490-1c-.060-.020-.120-.030-.180-.030-.170 0-.340.090-.430.250l-2 3.460c-.130.220-.070.490.120.640l2.110 1.650c-.040.320-.070.650-.070.980 0 .330.030.660.070.980l-2.110 1.650c-.190.150-.240.420-.120.640l2 3.460c.090.160.260.250.440.250.060 0 .120-.010.170-.030l2.490-1c.520.400 1.080.730 1.690.980l.380 2.650c.030.240.240.420.490.420h4c.250 0 .460-.180.490-.420l.380-2.650c.610-.250 1.170-.590 1.690-.980l2.490 1c.060.020.120.030.180.030.170 0 .340-.090.430-.250l2-3.460c.120-.220.070-.490-.120-.640l-2.110-1.650zm-1.980-1.710c.040.310.050.520.050.730 0 .210-.020.430-.050.730l-.140 1.130.890.700 1.080.840-.700 1.210-1.270-.510-1.040-.420-.900.680c-.430.320-.840.560-1.250.730l-1.060.430-.160 1.130-.200 1.350h-1.400l-.190-1.350-.160-1.130-1.060-.430c-.430-.180-.830-.410-1.230-.710l-.910-.700-1.060.430-1.270.510-.700-1.210 1.080-.840.890-.700-.140-1.130c-.030-.310-.050-.540-.050-.740s.020-.430.050-.730l.140-1.130-.890-.700-1.080-.840.700-1.210 1.270.510 1.040.420.900-.680c.430-.320.840-.560 1.250-.730l1.060-.430.160-1.130.200-1.350h1.390l.190 1.350.160 1.130 1.060.430c.430.180.830.410 1.230.710l.910.700 1.060-.430 1.270-.510.700 1.210-1.070.850-.890.700.140 1.130zM12 8c-2.210 0-4 1.790-4 4s1.790 4 4 4 4-1.790 4-4-1.790-4-4-4zm0 6c-1.100 0-2-.900-2-2s.900-2 2-2 2 .900 2 2-.900 2-2 2z"/></svg>
<div style="left:232px;top:312px;width:1418px;height:1px;background:#bcc0ca;"></div>
<div style="left:232px;top:345px;width:1403px;height:44px;background:#5562bd;"></div>
<div style="left:232px;top:344px;width:1418px;height:1px;background:#bcc0ca;"></div>
<div style="left:232px;top:389px;width:1403px;height:1px;background:#c4c6d0;"></div>
<div style="left:301px;top:313px;width:1px;height:76px;background:#bcc0ca;"></div>
<div style="left:461px;top:313px;width:1px;height:76px;background:#bcc0ca;"></div>
<div style="left:752px;top:313px;width:1px;height:76px;background:#bcc0ca;"></div>
<div style="left:825px;top:313px;width:1px;height:76px;background:#bcc0ca;"></div>
<div style="left:898px;top:313px;width:1px;height:76px;background:#bcc0ca;"></div>
<div style="left:1033px;top:313px;width:1px;height:76px;background:#bcc0ca;"></div>
<div style="left:1098px;top:313px;width:1px;height:76px;background:#bcc0ca;"></div>
<div style="left:1198px;top:313px;width:1px;height:76px;background:#bcc0ca;"></div>
<div style="left:1271px;top:313px;width:1px;height:76px;background:#bcc0ca;"></div>
<div style="left:1336px;top:313px;width:1px;height:76px;background:#bcc0ca;"></div>
<div style="left:1426px;top:313px;width:1px;height:76px;background:#bcc0ca;"></div>
<div style="left:1496px;top:313px;width:1px;height:76px;background:#bcc0ca;"></div>
<div style="left:1544px;top:313px;width:1px;height:76px;background:#bcc0ca;"></div>
<div style="left:261px;top:313px;width:1px;height:32px;background:#8c8c94;"></div>
<div style="left:1635px;top:313px;width:1px;height:32px;background:#8c8c94;"></div>
<div style="left:271px;top:318px;width:22px;height:22px;border:2px solid #3949ab;border-radius:4px;"></div>
<div style="left:271px;top:356px;width:22px;height:22px;border:2px solid #f4f4fa;border-radius:4px;"></div>
<svg style="left:238px;top:358px;width:18px;height:18px;" viewBox="0 0 18 18" fill="currentColor"><path d="M9 0v18M0 9h18" stroke="#fff" stroke-width="2"/></svg>
<span class="t" style="left:310.40px;top:322.00px;font-size:12.5px;line-height:16px;color:#18284a;letter-spacing:-0.137px;-webkit-text-stroke:0.35px #18284a;">Item</span>
<span class="t" style="left:470.40px;top:322.00px;font-size:12.5px;line-height:16px;color:#18284a;letter-spacing:-0.103px;-webkit-text-stroke:0.35px #18284a;">Description</span>
<span class="t" style="left:761.10px;top:322.00px;font-size:12.5px;line-height:16px;color:#18284a;letter-spacing:-0.123px;-webkit-text-stroke:0.35px #18284a;">Qty</span>
<span class="t" style="left:834.50px;top:322.00px;font-size:12.5px;line-height:16px;color:#18284a;letter-spacing:-0.246px;-webkit-text-stroke:0.35px #18284a;">UoM</span>
<span class="t" style="left:907.30px;top:322.00px;font-size:12.5px;line-height:16px;color:#18284a;letter-spacing:-0.562px;-webkit-text-stroke:0.35px #18284a;transform:scaleX(0.9750);transform-origin:0 0;">Rate</span>
<span class="t" style="left:1042.40px;top:322.00px;font-size:12.5px;line-height:16px;color:#18284a;letter-spacing:-0.148px;-webkit-text-stroke:0.35px #18284a;">Discount</span>
<span class="t" style="left:1107.30px;top:322.00px;font-size:12.5px;line-height:16px;color:#18284a;letter-spacing:0.124px;-webkit-text-stroke:0.35px #18284a;">Amount</span>
<span class="t" style="left:1207.00px;top:322.00px;font-size:12.5px;line-height:16px;color:#18284a;letter-spacing:-0.562px;-webkit-text-stroke:0.35px #18284a;transform:scaleX(0.9549);transform-origin:0 0;">Tax</span>
<span class="t" style="left:1280.00px;top:322.00px;font-size:12.5px;line-height:16px;color:#18284a;letter-spacing:-0.124px;-webkit-text-stroke:0.35px #18284a;">Settings</span>
<span class="t" style="left:1345.00px;top:322.00px;font-size:12.5px;line-height:16px;color:#18284a;letter-spacing:-0.125px;-webkit-text-stroke:0.35px #18284a;">Consignment</span>
<span class="t" style="left:1435.40px;top:322.00px;font-size:12.5px;line-height:16px;color:#18284a;letter-spacing:-0.104px;-webkit-text-stroke:0.35px #18284a;">Dropship</span>
<span class="t" style="left:1505.00px;top:322.00px;font-size:12.5px;line-height:16px;color:#18284a;letter-spacing:-0.167px;-webkit-text-stroke:0.35px #18284a;">Avail</span>
<span class="t" style="left:1553.40px;top:322.00px;font-size:12.5px;line-height:16px;color:#18284a;letter-spacing:0.012px;-webkit-text-stroke:0.35px #18284a;">Action</span>
<span class="t" style="left:310.40px;top:359.00px;font-size:14px;line-height:18px;color:#f6f6fc;letter-spacing:0.083px;">0310000</span>
<svg style="left:435px;top:358px;width:18px;height:18px;" viewBox="0 0 18 18" fill="currentColor"><circle cx="9" cy="9" r="8" fill="none" stroke="#fff" stroke-width="1.800"/><path d="M9 8v5.600" stroke="#fff" stroke-width="1.900"/><rect x="8" y="4.300" width="2" height="2" rx="0.400" fill="#fff"/></svg>
<span class="t" style="left:478.30px;top:349.00px;font-size:14px;line-height:18px;color:#f6f6fc;letter-spacing:-0.134px;">Skully Chair Green No Arm Skully Office</span>
<span class="t" style="left:478.30px;top:368.00px;font-size:14px;line-height:18px;color:#f6f6fc;letter-spacing:-0.589px;">Chair;</span>
<span class="t" style="left:769.20px;top:359.00px;font-size:14px;line-height:18px;color:#f6f6fc;">5</span>
<span class="t" style="left:836.00px;top:359.00px;font-size:14px;line-height:18px;color:#f6f6fc;">6</span>
<svg style="left:876.0px;top:365.0px;width:10px;height:6px;" viewBox="0 0 10 6" fill="currentColor"><path d="M0 0h10l-5.0 6z" fill="#b4b6c4"/></svg>
<span class="t" style="left:915.00px;top:359.00px;font-size:14px;line-height:18px;color:#f6f6fc;letter-spacing:-0.484px;">34.00</span>
<div style="left:997px;top:358px;width:18px;height:18px;background:#05588e;border-radius:3px;"></div>
<span class="t" style="left:999.30px;top:360.50px;font-size:10.5px;line-height:14px;color:#fff;letter-spacing:-0.472px;transform:scaleX(0.9636);transform-origin:0 0;">CP</span>
<div style="left:1021px;top:357px;width:5px;height:5px;background:#f0f0f6;"></div>
<div style="left:1021px;top:364.5px;width:5px;height:5px;background:#f0f0f6;"></div>
<div style="left:1021px;top:372px;width:5px;height:5px;background:#f0f0f6;"></div>
<span class="t" style="left:1058.00px;top:357.00px;font-size:18px;line-height:23px;color:#fff;font-weight:700;">%</span>
<span class="t" style="left:1115.80px;top:359.00px;font-size:14px;line-height:18px;color:#f6f6fc;letter-spacing:-0.624px;">170.00</span>
<span class="t" style="left:1209.00px;top:359.00px;font-size:14px;line-height:18px;color:#f6f6fc;letter-spacing:-0.630px;transform:scaleX(0.9403);transform-origin:0 0;">Tax</span>
<svg style="left:1249.0px;top:365.0px;width:10px;height:6px;" viewBox="0 0 10 6" fill="currentColor"><path d="M0 0h10l-5.0 6z" fill="#b4b6c4"/></svg>
<span class="t" style="left:1280.00px;top:359.00px;font-size:14px;line-height:18px;color:#f6f6fc;letter-spacing:0.131px;">Actions</span>
<div style="left:1366px;top:362px;width:32px;height:10px;background:#c4c7d0;border-radius:5px;"></div>
<div style="left:1366px;top:358px;width:18px;height:18px;background:#878ea6;border-radius:9px;"></div>
<div style="left:1442px;top:362px;width:32px;height:10px;background:#c4c7d0;border-radius:5px;"></div>
<div style="left:1442px;top:358px;width:18px;height:18px;background:#878ea6;border-radius:9px;"></div>
<svg style="left:1510px;top:356.5px;width:21px;height:21px;" viewBox="0 0 22 22" fill="currentColor"><circle cx="11" cy="11" r="10.200" fill="#43a047" stroke="#f0f0f0" stroke-width="1.500"/><path d="M6 11.300l3.400 3.400 6.600-6.600" fill="none" stroke="#fff" stroke-width="1.900"/></svg>
<span class="t" style="left:1553.40px;top:359.00px;font-size:14px;line-height:18px;color:#f6f6fc;letter-spacing:-0.281px;">Delivery</span>
<svg style="left:1637px;top:351px;width:12px;height:8px;" viewBox="0 0 12 8" fill="currentColor"><path d="M1.500 6.500L6 2l4.500 4.500" stroke="#dcdce0" stroke-width="1.200" fill="none"/></svg>
<svg style="left:1637px;top:816px;width:12px;height:8px;" viewBox="0 0 12 8" fill="currentColor"><path d="M1.500 1.500L6 6l4.500-4.500" stroke="#dcdce0" stroke-width="1.200" fill="none"/></svg>
<span class="t" style="left:240.50px;top:812.00px;font-size:15px;line-height:20px;color:#18284a;letter-spacing:-0.270px;-webkit-text-stroke:0.4px #18284a;">Total:</span>
<span class="t" style="left:279.50px;top:812.00px;font-size:15px;line-height:20px;color:#18284a;">1</span>
<span class="t" style="left:360.60px;top:812.00px;font-size:15px;line-height:20px;color:#18284a;letter-spacing:-0.262px;-webkit-text-stroke:0.4px #18284a;">Total Qty:</span>
<span class="t" style="left:425.30px;top:812.00px;font-size:15px;line-height:20px;color:#18284a;">5</span>
<div style="left:240px;top:855px;width:849px;height:116px;background:linear-gradient(90deg,#e9e2d0 0%,#e8e2c8 50%,#e6e1ba 100%);border:1px solid #c4c4c8;border-radius:4px;"></div>
<span class="t" style="left:249.20px;top:866.00px;font-size:16px;line-height:21px;color:#707a8c;letter-spacing:0.244px;text-rendering:geometricPrecision;-webkit-text-stroke:0.3px #707a8c;">Order Note...</span>
<div style="left:1097px;top:865px;width:32px;height:10px;background:#c4c7d0;border-radius:5px;"></div>
<div style="left:1097px;top:861px;width:18px;height:18px;background:#878ea6;border-radius:9px;"></div>
<span class="t" style="left:1137.30px;top:861.00px;font-size:14px;line-height:18px;color:#2b3b60;letter-spacing:-0.326px;">Walk In</span>
<div style="left:1097px;top:895px;width:32px;height:10px;background:#9499d0;border-radius:5px;"></div>
<div style="left:1111px;top:891px;width:18px;height:18px;background:#3f4bb0;border-radius:9px;"></div>
<span class="t" style="left:1137.30px;top:891.00px;font-size:14px;line-height:18px;color:#2b3b60;letter-spacing:-0.295px;">Delivery</span>
<div style="left:1097px;top:925px;width:32px;height:10px;background:#c4c7d0;border-radius:5px;"></div>
<div style="left:1097px;top:921px;width:18px;height:18px;background:#878ea6;border-radius:9px;"></div>
<span class="t" style="left:1137.30px;top:921.00px;font-size:14px;line-height:18px;color:#2b3b60;letter-spacing:-0.524px;">Pickup</span>
<div style="left:1097px;top:955px;width:32px;height:10px;background:#c4c7d0;border-radius:5px;"></div>
<div style="left:1097px;top:951px;width:18px;height:18px;background:#878ea6;border-radius:9px;"></div>
<span class="t" style="left:1137.30px;top:951.00px;font-size:14px;line-height:18px;color:#2b3b60;letter-spacing:-0.090px;">Dropship</span>
<div style="left:1210px;top:855px;width:1px;height:116px;background:#bcc0ca;"></div>
<div style="left:1219px;top:865px;width:32px;height:10px;background:#c4c7d0;border-radius:5px;"></div>
<div style="left:1219px;top:861px;width:18px;height:18px;background:#878ea6;border-radius:9px;"></div>
<span class="t" style="left:1259.60px;top:861.00px;font-size:14px;line-height:18px;color:#2b3b60;letter-spacing:-0.630px;transform:scaleX(0.9637);transform-origin:0 0;">PO Req.</span>
<div style="left:1316px;top:855px;width:1px;height:116px;background:#bcc0ca;"></div>
<span class="t" style="left:1325.40px;top:862.00px;font-size:12px;line-height:16px;color:#2b3b60;letter-spacing:-0.469px;">Tax:</span>
<div style="left:1350px;top:855px;width:125px;height:28px;border:1px solid #adb2bd;border-radius:3px;"></div>
<span class="t" style="left:1363.70px;top:861.00px;font-size:14.5px;line-height:19px;color:#18284a;letter-spacing:-0.652px;-webkit-text-stroke:0.35px #18284a;transform:scaleX(0.8944);transform-origin:0 0;">NYS</span>
<svg style="left:1449.0px;top:866.0px;width:10px;height:6px;" viewBox="0 0 10 6" fill="currentColor"><path d="M0 0h10l-5.0 6z" fill="#a8acbc"/></svg>
<span class="t" style="left:1325.40px;top:888.00px;font-size:14px;line-height:18px;color:#2b3b60;letter-spacing:-0.257px;">Discount:</span>
<span class="t" style="left:1440.60px;top:888.00px;font-size:14px;line-height:18px;color:#2b3b60;letter-spacing:-0.259px;">$0.00</span>
<span class="t" style="left:1325.40px;top:910.00px;font-size:14px;line-height:18px;color:#2b3b60;letter-spacing:-0.472px;">SubTotal:</span>
<span class="t" style="left:1424.60px;top:910.00px;font-size:14px;line-height:18px;color:#2b3b60;letter-spacing:-0.101px;">$170.00</span>
<span class="t" style="left:1325.40px;top:932.00px;font-size:14px;line-height:18px;color:#2b3b60;letter-spacing:-0.630px;transform:scaleX(0.8661);transform-origin:0 0;">Tax:</span>
<span class="t" style="left:1432.60px;top:932.00px;font-size:14px;line-height:18px;color:#2b3b60;letter-spacing:-0.164px;">$15.09</span>
<span class="t" style="left:1325.40px;top:954.00px;font-size:14px;line-height:18px;color:#18284a;letter-spacing:-0.012px;-webkit-text-stroke:0.45px #18284a;">Total:</span>
<span class="t" style="left:1426.60px;top:954.00px;font-size:14px;line-height:18px;color:#18284a;letter-spacing:-0.435px;-webkit-text-stroke:0.45px #18284a;">$185.09</span>
<div style="left:1483px;top:855px;width:1px;height:116px;background:#bcc0ca;"></div>
<span class="t" style="left:1492.50px;top:861.00px;font-size:14px;line-height:18px;color:#18284a;letter-spacing:-0.430px;-webkit-text-stroke:0.35px #18284a;">Payments:</span>
<span class="t" style="left:1591.70px;top:861.00px;font-size:14px;line-height:18px;color:#18284a;letter-spacing:-0.051px;-webkit-text-stroke:0.2px #18284a;">$300.00</span>
<span class="t" style="left:1492.50px;top:888.00px;font-size:14px;line-height:18px;color:#18284a;letter-spacing:-0.630px;-webkit-text-stroke:0.35px #18284a;transform:scaleX(0.9934);transform-origin:0 0;">Due:</span>
<span class="t" style="left:1607.60px;top:888.00px;font-size:14px;line-height:18px;color:#18284a;letter-spacing:-0.159px;-webkit-text-stroke:0.2px #18284a;">$0.00</span>
<span class="t" style="left:1570.00px;top:950.00px;font-size:12.5px;line-height:16px;color:#3f4bb0;letter-spacing:-0.150px;">Payment Info</span>
<div style="left:232px;top:979px;width:1418px;height:1px;background:#b8bcc6;"></div>
<div style="left:240px;top:988px;width:123px;height:36px;border:1px solid #9aa1d2;border-radius:4px;"></div>
<span class="t" style="left:257.20px;top:998.00px;font-size:14px;line-height:18px;color:#9aa1d2;letter-spacing:-0.034px;-webkit-text-stroke:0.35px #9aa1d2;">Convert to SO</span>
<div style="left:371px;top:988px;width:106px;height:36px;border:1px solid #9aa1d2;border-radius:4px;"></div>
<span class="t" style="left:388.40px;top:998.00px;font-size:14px;line-height:18px;color:#9aa1d2;letter-spacing:0.127px;-webkit-text-stroke:0.35px #9aa1d2;">Credit Hold</span>
<div style="left:485px;top:988px;width:99px;height:36px;border:1px solid #3a47a6;border-radius:4px;"></div>
<span class="t" style="left:502.00px;top:998.00px;font-size:14px;line-height:18px;color:#3a47a6;letter-spacing:-0.082px;-webkit-text-stroke:0.35px #3a47a6;">Save Draft</span>
<div style="left:592px;top:988px;width:88px;height:36px;border:1px solid #9aa1d2;border-radius:4px;"></div>
<span class="t" style="left:620.50px;top:998.00px;font-size:14px;line-height:18px;color:#9aa1d2;letter-spacing:-0.304px;-webkit-text-stroke:0.35px #9aa1d2;">Save</span>
<div style="left:688px;top:988px;width:90px;height:36px;border:1px solid #3a47a6;border-radius:4px;"></div>
<span class="t" style="left:705.00px;top:998.00px;font-size:14px;line-height:18px;color:#3a47a6;letter-spacing:0.219px;-webkit-text-stroke:0.35px #3a47a6;">Discount</span>
<div style="left:786px;top:988px;width:144px;height:36px;border:1px solid #9aa1d2;border-radius:4px;"></div>
<span class="t" style="left:803.00px;top:998.00px;font-size:14px;line-height:18px;color:#9aa1d2;letter-spacing:-0.035px;-webkit-text-stroke:0.35px #9aa1d2;">Remove Discount</span>
<div style="left:938px;top:988px;width:157px;height:36px;border:1px solid #3a47a6;border-radius:4px;"></div>
<span class="t" style="left:955.00px;top:998.00px;font-size:14px;line-height:18px;color:#3a47a6;letter-spacing:0.052px;-webkit-text-stroke:0.35px #3a47a6;">Discount Campaign</span>
<div style="left:1509px;top:988px;width:133px;height:36px;background:linear-gradient(90deg,#b5b8db,#bec1e1);border-radius:4px;"></div>
<span class="t" style="left:1525.20px;top:997.00px;font-size:15px;line-height:20px;color:#e9e9f5;letter-spacing:-0.648px;-webkit-text-stroke:0.3px #e9e9f5;">Accept Payment</span>
<div style="left:1658px;top:128px;width:16px;height:904px;background:#304368;border-radius:4px 0 0 4px;"></div>
<svg style="left:1662.2px;top:575.6px;width:7.4px;height:9px;" viewBox="0 0 9 11" fill="currentColor"><path d="M2.200 1.300L6.600 5.500 2.200 9.700" stroke="#fff" stroke-width="2.100" fill="none"/></svg>
<div style="left:1674px;top:128px;width:206px;height:908px;background:#1a3057;"></div>
<svg style="left:1683px;top:142px;width:14px;height:14px;" viewBox="0 0 14 14" fill="currentColor"><path d="M0.500 2.800h12.500M0.500 7.200h12.500M0.500 11.600h12.500" stroke="#fff" stroke-width="2"/></svg>
<span class="t" style="left:1706.20px;top:139.00px;font-size:15px;line-height:20px;color:#fff;letter-spacing:-0.675px;-webkit-text-stroke:0.35px #fff;transform:scaleX(0.9687);transform-origin:0 0;">Home</span>
<svg style="left:1850.2px;top:136.1px;width:24px;height:24px;color:#fff;" viewBox="0 0 24 24" fill="currentColor"><path d="M19.430 12.980c.040-.320.070-.640.070-.980 0-.340-.030-.660-.070-.980l2.110-1.650c.190-.150.240-.420.120-.640l-2-3.460c-.090-.160-.260-.250-.440-.250-.060 0-.120.010-.170.030l-2.490 1c-.520-.400-1.080-.730-1.690-.980l-.380-2.650C14.460 2.180 14.250 2 14 2h-4c-.250 0-.460.180-.490.420l-.380 2.650c-.610.250-1.170.590-1.690.980l-2.490-1c-.060-.020-.120-.030-.180-.030-.170 0-.340.090-.430.250l-2 3.460c-.130.220-.070.490.120.640l2.110 1.650c-.040.320-.070.650-.070.980 0 .330.030.660.070.980l-2.110 1.650c-.190.150-.240.420-.120.640l2 3.460c.090.160.260.250.440.250.060 0 .120-.010.170-.030l2.490-1c.520.400 1.080.730 1.690.980l.380 2.650c.030.240.240.420.490.420h4c.250 0 .460-.180.490-.420l.380-2.650c.610-.250 1.170-.590 1.690-.980l2.490 1c.060.020.120.030.180.030.170 0 .340-.090.430-.250l2-3.460c.120-.220.070-.490-.120-.640l-2.110-1.650zm-1.980-1.710c.040.310.050.520.050.730 0 .210-.020.430-.050.730l-.140 1.130.890.700 1.080.840-.700 1.210-1.270-.510-1.040-.420-.900.680c-.430.320-.840.560-1.250.730l-1.060.430-.160 1.130-.200 1.350h-1.400l-.190-1.350-.160-1.130-1.060-.430c-.430-.180-.830-.410-1.230-.710l-.910-.700-1.060.430-1.270.510-.700-1.210 1.080-.840.890-.700-.140-1.130c-.030-.310-.050-.540-.050-.740s.020-.430.050-.730l.140-1.130-.890-.700-1.080-.840.700-1.210 1.270.510 1.040.420.900-.680c.430-.320.840-.560 1.250-.730l1.060-.430.160-1.130.200-1.350h1.390l.190 1.350.160 1.130 1.060.430c.430.180.830.410 1.230.710l.910.700 1.060-.430 1.270-.510.700 1.210-1.070.850-.890.700.140 1.130zM12 8c-2.210 0-4 1.790-4 4s1.790 4 4 4 4-1.790 4-4-1.790-4-4-4zm0 6c-1.100 0-2-.900-2-2s.900-2 2-2 2 .900 2 2-.900 2-2 2z"/></svg>
<div style="left:1683px;top:177px;width:182px;height:56px;border:1px solid #74829f;border-radius:4px;"></div>
<span class="t" style="left:1692.40px;top:187.00px;font-size:14.5px;line-height:19px;color:#fff;letter-spacing:-0.349px;-webkit-text-stroke:0.55px #fff;">Chocolate</span>
<span class="t" style="left:1692.40px;top:209.00px;font-size:12px;line-height:16px;color:#d4d8e4;letter-spacing:-0.221px;">Chocolate sweets</span>
<div style="left:1683px;top:241px;width:182px;height:37px;border:1px solid #74829f;border-radius:4px;"></div>
<span class="t" style="left:1692.40px;top:251.00px;font-size:14.5px;line-height:19px;color:#fff;letter-spacing:-0.376px;-webkit-text-stroke:0.55px #fff;">Gold</span>
<div style="left:1683px;top:286px;width:182px;height:56px;border:1px solid #74829f;border-radius:4px;"></div>
<span class="t" style="left:1692.40px;top:296.00px;font-size:14.5px;line-height:19px;color:#fff;letter-spacing:-0.081px;-webkit-text-stroke:0.55px #fff;">Marshmallow</span>
<span class="t" style="left:1692.40px;top:318.00px;font-size:12px;line-height:16px;color:#d4d8e4;letter-spacing:-0.356px;">Sweet pops</span>
<div style="left:1683px;top:350px;width:182px;height:37px;border:1px solid #74829f;border-radius:4px;"></div>
<span class="t" style="left:1692.40px;top:360.00px;font-size:14.5px;line-height:19px;color:#fff;letter-spacing:0.141px;-webkit-text-stroke:0.55px #fff;">Milka</span>
<div style="left:1683px;top:395px;width:182px;height:37px;border:1px solid #74829f;border-radius:4px;"></div>
<span class="t" style="left:1692.40px;top:405.00px;font-size:14.5px;line-height:19px;color:#fff;-webkit-text-stroke:0.15px #fff;">1</span>
<div style="left:1683px;top:440px;width:182px;height:37px;border:1px solid #74829f;border-radius:4px;"></div>
<span class="t" style="left:1692.40px;top:450.00px;font-size:14.5px;line-height:19px;color:#fff;-webkit-text-stroke:0.15px #fff;">12</span>
<div style="left:1683px;top:485px;width:182px;height:37px;border:1px solid #74829f;border-radius:4px;"></div>
<span class="t" style="left:1692.40px;top:495.00px;font-size:14.5px;line-height:19px;color:#fff;-webkit-text-stroke:0.15px #fff;">2</span>
<div style="left:1683px;top:530px;width:182px;height:37px;border:1px solid #74829f;border-radius:4px;"></div>
<span class="t" style="left:1692.40px;top:540.00px;font-size:14.5px;line-height:19px;color:#fff;letter-spacing:-0.317px;-webkit-text-stroke:0.15px #fff;">Art paper bags</span>
<div style="left:1683px;top:575px;width:182px;height:37px;border:1px solid #74829f;border-radius:4px;"></div>
<span class="t" style="left:1692.40px;top:585.00px;font-size:14.5px;line-height:19px;color:#fff;letter-spacing:-0.652px;-webkit-text-stroke:0.15px #fff;transform:scaleX(0.9327);transform-origin:0 0;">Bags</span>
<div style="left:1683px;top:620px;width:182px;height:37px;border:1px solid #74829f;border-radius:4px;"></div>
<span class="t" style="left:1692.40px;top:630.00px;font-size:14.5px;line-height:19px;color:#fff;letter-spacing:-0.652px;-webkit-text-stroke:0.15px #fff;transform:scaleX(0.9551);transform-origin:0 0;">Boxes</span>
<div style="left:1683px;top:665px;width:182px;height:37px;border:1px solid #74829f;border-radius:4px;"></div>
<span class="t" style="left:1692.40px;top:675.00px;font-size:14.5px;line-height:19px;color:#fff;letter-spacing:-0.428px;-webkit-text-stroke:0.15px #fff;">Brooms, mops, dust pans</span>
<div style="left:1683px;top:710px;width:182px;height:37px;border:1px solid #74829f;border-radius:4px;"></div>
<span class="t" style="left:1692.40px;top:720.00px;font-size:14.5px;line-height:19px;color:#fff;letter-spacing:-0.567px;-webkit-text-stroke:0.15px #fff;">Bubbles</span>
<div style="left:1683px;top:755px;width:182px;height:56px;border:1px solid #74829f;border-radius:4px;"></div>
<span class="t" style="left:1692.40px;top:765.00px;font-size:14.5px;line-height:19px;color:#fff;letter-spacing:-0.652px;-webkit-text-stroke:0.15px #fff;transform:scaleX(0.9823);transform-origin:0 0;">cat1</span>
<span class="t" style="left:1692.40px;top:787.00px;font-size:12px;line-height:16px;color:#d4d8e4;letter-spacing:-0.341px;">dads</span>
<div style="left:1683px;top:819px;width:182px;height:37px;border:1px solid #74829f;border-radius:4px;"></div>
<span class="t" style="left:1692.40px;top:829.00px;font-size:14.5px;line-height:19px;color:#fff;letter-spacing:-0.331px;-webkit-text-stroke:0.15px #fff;">Chipboard boxes</span>
<div style="left:1683px;top:864px;width:182px;height:56px;border:1px solid #74829f;border-radius:4px;"></div>
<span class="t" style="left:1692.40px;top:874.00px;font-size:14.5px;line-height:19px;color:#fff;letter-spacing:-0.051px;-webkit-text-stroke:0.15px #fff;">Cleaning &amp; Disinfecting</span>
<span class="t" style="left:1692.40px;top:893.00px;font-size:14.5px;line-height:19px;color:#fff;letter-spacing:-0.375px;-webkit-text-stroke:0.15px #fff;">Supplies</span>
<div style="left:1683px;top:928px;width:182px;height:37px;border:1px solid #74829f;border-radius:4px;"></div>
<span class="t" style="left:1692.40px;top:938.00px;font-size:14.5px;line-height:19px;color:#fff;letter-spacing:-0.351px;-webkit-text-stroke:0.15px #fff;">Corrugated boxes</span>
<div style="left:1683px;top:973px;width:182px;height:37px;border:1px solid #74829f;border-radius:4px;"></div>
<span class="t" style="left:1692.40px;top:983.00px;font-size:14.5px;line-height:19px;color:#fff;letter-spacing:-0.239px;-webkit-text-stroke:0.15px #fff;">Custom items</span>
<div style="left:1683px;top:1018px;width:182px;height:37px;border:1px solid #74829f;border-radius:4px;"></div>
<span class="t" style="left:1692.40px;top:1028.00px;font-size:14.5px;line-height:19px;color:#fff;letter-spacing:-0.236px;-webkit-text-stroke:0.15px #fff;">Die cut bags</span>
<div style="left:1871px;top:176px;width:4px;height:447px;background:#e2e5f1;"></div>
<div style="left:1880px;top:128px;width:39px;height:904px;background:#4a58b8;border-radius:4px 0 0 4px;"></div>
<svg style="left:1892px;top:574px;width:16.3px;height:11.7px;color:#fff" viewBox="3.000 6.000 18.000 12.000" preserveAspectRatio="none" fill="currentColor"><path d="M3 18h13v-2H3v2zm0-5h10v-2H3v2zm0-7v2h13V6H3zm18 9.590L17.420 12 21 8.410 19.590 7l-5 5 5 5L21 15.590z"/></svg>
<div style="left:0;top:0;width:1919px;height:1036px;transform:translate(0.5px,0.5px);pointer-events:none">
<div style="left:660px;top:502px;width:399px;height:155px;background:#ffffff;border-radius:1px 1px 4px 4px;"></div>
<div style="left:660px;top:502px;width:399px;height:34px;background:#303030;"></div>
<div style="left:679px;top:616px;width:104px;height:25px;background:#035b97;border:1px solid #0a5288;border-radius:1px;"></div>
<div style="left:789px;top:616px;width:140px;height:25px;background:#035b97;border:1px solid #0a5288;border-radius:1px;"></div>
<div style="left:935px;top:616px;width:105px;height:25px;background:#035b97;border:1px solid #0a5288;border-radius:1px;"></div>
</div>
<span class="t" style="left:671.40px;top:511.00px;font-size:16px;line-height:21px;color:#fff;letter-spacing:-0.144px;text-rendering:geometricPrecision;">Overpayment</span>
<svg style="left:1036.5px;top:513.6px;width:12px;height:12px;" viewBox="0 0 12 12" fill="currentColor"><path d="M1 1l10 10M11 1L1 11" stroke="#fff" stroke-width="1.100" fill="none"/></svg>
<span class="t" style="left:677.40px;top:569.00px;font-size:12px;line-height:16px;color:#202020;letter-spacing:-0.362px;">Change Due:</span>
<span class="t" style="left:748.50px;top:569.00px;font-size:12px;line-height:16px;color:#202020;letter-spacing:0.181px;font-weight:700;">$114.91</span>
<span class="t" style="left:695.30px;top:622.00px;font-size:12px;line-height:16px;color:#fff;letter-spacing:-0.540px;transform:scaleX(0.9641);transform-origin:0 0;">PAY INVOICES</span>
<span class="t" style="left:805.20px;top:622.00px;font-size:12px;line-height:16px;color:#fff;letter-spacing:-0.540px;transform:scaleX(0.9932);transform-origin:0 0;">APPLY TO ACCOUNT</span>
<span class="t" style="left:951.40px;top:622.00px;font-size:12px;line-height:16px;color:#fff;letter-spacing:-0.540px;transform:scaleX(0.9544);transform-origin:0 0;">GIVE CHANGE</span>
</div></body></html>
